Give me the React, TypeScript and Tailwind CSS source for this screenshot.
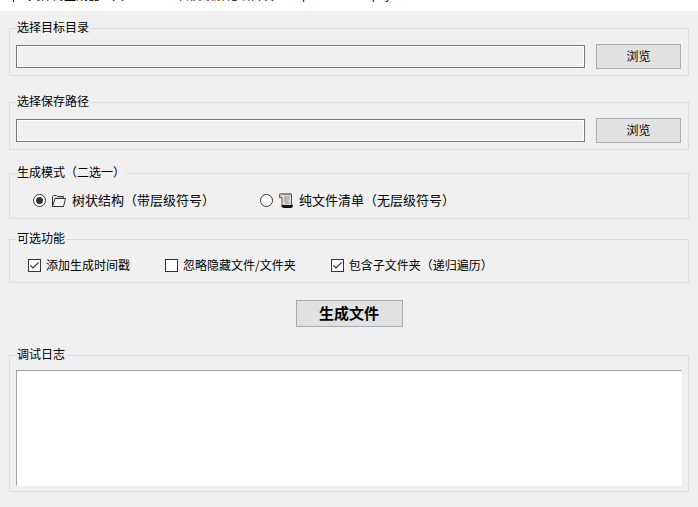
import { useState, type ReactNode } from "react";

const OPTIONS = [
  { id: "timestamp", label: "添加生成时间戳", on: true },
  { id: "hidden", label: "忽略隐藏文件/文件夹", on: false },
  { id: "recursive", label: "包含子文件夹（递归遍历）", on: true },
];

function Group({ title, className, children }: { title: string; className: string; children: ReactNode }) {
  return (
    <fieldset className={`min-w-0 border border-[#dcdcdc] px-1.5 ${className}`}>
      <legend className="px-px pb-1 leading-[13px]">{title}</legend>
      {children}
    </fieldset>
  );
}

function PathRow({ label }: { label: string }) {
  return (
    <div className="flex items-center gap-[11px] pr-px">
      <input
        type="text"
        readOnly
        aria-label={label}
        className="h-[23px] min-w-0 flex-1 border border-[#7a7a7a] bg-[#f0f0f0] px-1 shadow-[inset_0_0_0_1px_#fff] outline-none"
      />
      <button type="button" className="h-[25px] w-[85px] border border-[#adadad] bg-[#e1e1e1] pb-px leading-5">
        浏览
      </button>
    </div>
  );
}

function FolderIcon() {
  return (
    <svg width="14" height="15" viewBox="0 0 14 15" fill="none" aria-hidden="true">
      <path d="M0.5 13.5V3.5L1.5 2.5H4.5L5.5 3.5H11.5V5.5" stroke="#333" />
      <path d="M0.5 13.5L3 5.5H13.5L11.5 13.5Z" fill="#f4f4f4" stroke="#333" strokeLinejoin="round" />
      <path d="M2 4.5H11" stroke="#c8c8c8" />
    </svg>
  );
}

function ScrollIcon() {
  return (
    <svg width="14" height="15" viewBox="0 0 14 15" fill="none" aria-hidden="true">
      <path d="M2.5 1H12.5V13H4V4Z" fill="#dedede" />
      <path d="M0.5 1H12.5" stroke="#222" />
      <path d="M12.5 1V12" stroke="#555" />
      <path d="M0.5 1.5V4.5H3V12.5" stroke="#6b4e35" />
      <path d="M1 1.6H3.4V4H1Z" fill="#e6c39c" />
      <path d="M5 4H10.5M5 6H10.5M5 8H9.5M6 10H10.5" stroke="#8a8a8a" />
      <path d="M2.5 12H12L13.8 11.5V14L12 15H4.5L2.5 13.8Z" fill="#111" />
    </svg>
  );
}

const MODES = [
  { id: "tree", label: "树状结构（带层级符号）", icon: <FolderIcon /> },
  { id: "list", label: "纯文件清单（无层级符号）", icon: <ScrollIcon /> },
];

export default function App() {
  const [mode, setMode] = useState("tree");
  const [checked, setChecked] = useState<Record<string, boolean>>(
    Object.fromEntries(OPTIONS.map((o) => [o.id, o.on]))
  );

  return (
    <div className="flex min-h-screen flex-col bg-[#f0f0f0] font-['Noto_Sans_CJK_SC',sans-serif] text-xs text-black">
      <header className="h-[11px] overflow-hidden bg-white">
        <div className="-mt-[13px] flex h-4 items-center whitespace-nowrap pl-2">
          <svg width="10" height="16" viewBox="0 0 10 16" className="mr-2.5 shrink-0" aria-hidden="true">
            <path d="M5.5 2V15" stroke="#111" />
          </svg>
          <h1 className="flex gap-[54px] leading-4">
            <span>文件树生成器工具</span>
            <span className="flex gap-3">
              <span>吾爱破解论坛首发</span>
              <span className="font-['Open_Sans',sans-serif]">https://www.52pojie.cn</span>
            </span>
          </h1>
        </div>
      </header>

      <main className="flex flex-1 flex-col px-[9px] pt-[9px] pb-[15px]">
        <Group title="选择目标目录" className="pt-[7px] pb-1.5">
          <PathRow label="选择目标目录" />
        </Group>

        <Group title="选择保存路径" className="mt-[18px] pt-[7px] pb-1.5">
          <PathRow label="选择保存路径" />
        </Group>

        <Group title="生成模式（二选一）" className="mt-[15px] pt-2 pb-2">
          <div className="flex gap-[45px] pl-[17px] text-[13px]">
            {MODES.map((m) => (
              <label key={m.id} className="flex h-5 items-center gap-1.5 whitespace-nowrap leading-5">
                <span className="grid place-items-center">
                  <input
                    type="radio"
                    name="mode"
                    checked={mode === m.id}
                    onChange={() => setMode(m.id)}
                    className="col-start-1 row-start-1 size-[13px] appearance-none rounded-full border border-[#333] bg-white"
                  />
                  {mode === m.id && (
                    <span className="pointer-events-none col-start-1 row-start-1 size-[7px] rounded-full bg-[#333]" />
                  )}
                </span>
                {m.icon}
                <span>{m.label}</span>
              </label>
            ))}
          </div>
        </Group>

        <Group title="可选功能" className="mt-3 pt-[7px] pb-[7px]">
          <div className="flex gap-[35px] pl-3">
            {OPTIONS.map((o) => (
              <label key={o.id} className="flex h-5 items-center gap-[5px] whitespace-nowrap leading-5">
                <span className="grid place-items-center">
                  <input
                    type="checkbox"
                    checked={checked[o.id]}
                    onChange={(e) => setChecked({ ...checked, [o.id]: e.target.checked })}
                    className="col-start-1 row-start-1 size-[13px] appearance-none border border-[#333] bg-white"
                  />
                  {checked[o.id] && (
                    <svg
                      width="13"
                      height="13"
                      viewBox="0 0 13 13"
                      fill="none"
                      className="pointer-events-none col-start-1 row-start-1"
                      aria-hidden="true"
                    >
                      <path d="M2.3 6.3L5 9L10.7 3.3" stroke="#333" strokeWidth="1.2" />
                    </svg>
                  )}
                </span>
                <span>{o.label}</span>
              </label>
            ))}
          </div>
        </Group>

        <button
          type="button"
          className="mt-[17px] h-[27px] w-[107px] self-center border border-[#a3adb6] bg-[#e1e1e1] pb-px text-[15px] leading-5 font-bold"
        >
          生成文件
        </button>

        <Group title="调试日志" className="mt-5 flex flex-1 flex-col pt-1.5 pb-[5px]">
          <textarea
            readOnly
            aria-label="调试日志"
            className="min-h-[116px] w-full flex-1 resize-none border border-t-[#a0a0a0] border-r-white border-b-white border-l-[#a0a0a0] bg-white p-1 outline-none"
          />
        </Group>
      </main>
    </div>
  );
}
